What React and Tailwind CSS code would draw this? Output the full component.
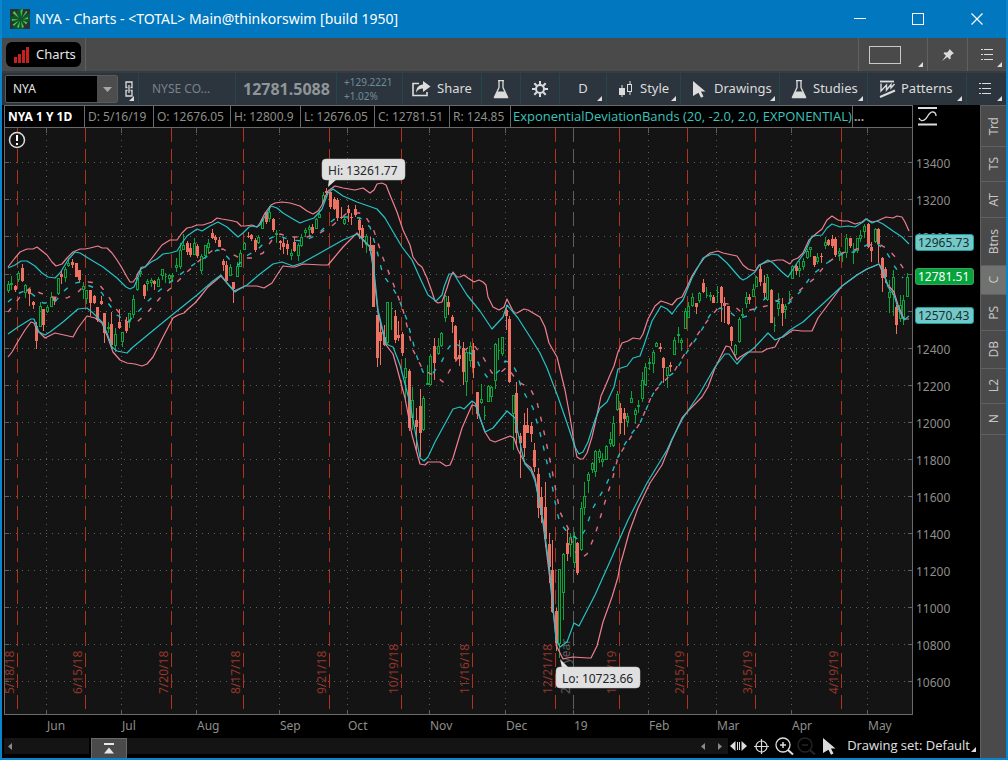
import { useState } from "react";
import { clsx } from "clsx";

// Plot geometry, in chart units
const LEFT = 4;
const RIGHT = 912;
const TOP = 127;
const BOTTOM = 714;

// direction + x, high, body top, body bottom, low
const CANDLES = `
g8,281,284,291,293 g11,276,283,285,290 r15,285,286,290,292 g18,271,273,280,282 r22,264,268,281,282 g25,284,285,293,298
r29,288,289,294,306 r33,301,302,305,309 r36,322,326,341,349 g40,302,306,327,327 r43,309,309,325,331 g47,305,307,312,313
g51,292,297,307,307 r54,297,297,301,305 g58,278,278,294,295 r61,270,274,277,284 g65,267,269,278,282 g68,258,263,266,267
r72,259,262,265,268 r76,263,263,277,277 r79,270,270,280,282 g83,282,286,290,299 g86,290,290,299,304 r90,290,290,303,316
r94,295,296,303,304 r97,307,307,320,322 r101,296,301,304,305 r104,313,313,333,343 g108,322,327,329,333 r111,312,324,345,347
g115,328,334,346,352 r119,309,322,328,329 g122,332,332,342,347 r126,317,321,331,333 g129,313,313,322,328 g133,295,299,315,318
g137,277,278,290,291 g140,267,271,274,277 r144,284,285,296,299 g147,279,281,284,291 g151,278,280,283,287 r154,280,281,284,290
g158,277,279,287,287 g162,269,269,276,280 g165,273,276,277,283 g169,274,275,279,282 g172,273,275,277,282 g176,258,265,268,272
g180,243,250,267,269 g183,234,245,250,250 r187,241,243,252,255 r190,243,248,255,257 g194,238,243,255,255 r197,244,246,256,258
g201,254,256,271,274 g205,245,245,256,259 g208,239,243,248,253 r212,229,233,238,239 r215,235,237,240,243 r219,237,240,247,247
r223,259,261,265,271 r226,261,265,281,281 g230,264,267,276,276 r233,282,282,289,303 g237,262,266,277,277 g240,250,253,267,267
g244,242,243,250,250 r248,232,236,237,238 r251,234,235,239,241 r255,238,240,250,252 g258,235,237,243,244 g262,217,219,229,229
r266,212,212,222,224 g269,206,212,219,222 r273,218,219,230,232 g276,230,233,235,243 r280,240,241,243,250 r283,238,243,247,254
r287,240,244,249,255 g291,249,253,256,260 r294,237,242,251,252 g298,243,245,256,261 g301,234,237,246,247 g305,228,230,233,237
g309,225,227,230,237 r312,224,227,233,234 g316,218,219,229,229 g319,210,214,218,218 g323,192,195,203,203 r326,188,191,193,194
r330,192,192,207,209 r334,197,199,209,210 r337,198,200,218,221 r341,207,217,218,219 g344,217,219,224,225 r348,205,209,213,222
r351,213,217,218,225 r355,205,209,215,217 r359,218,220,230,239 r362,225,228,238,248 g366,234,236,245,253 r370,237,245,251,253
r373,245,245,307,307 r377,315,315,358,367 r380,320,332,341,365 r384,325,337,345,346 g387,302,302,343,344 g391,302,308,309,330
r395,310,316,340,343 r398,321,335,338,341 r402,332,334,353,356 g405,358,368,378,402 r409,369,371,428,431 g412,387,400,418,430
r416,408,420,427,450 r420,389,406,433,457 g423,396,398,430,431 g427,365,383,385,385 g430,354,356,385,385 r434,338,346,363,380
g438,338,346,354,355 g441,332,333,346,347 g445,295,296,318,322 r448,296,302,307,315 r452,315,317,322,333 r455,325,326,359,360
r459,340,355,359,366 r463,342,348,372,385 g466,348,352,382,396 g470,342,346,361,367 r473,343,350,368,378 r477,392,392,414,419
g481,384,399,403,404 g484,406,415,416,420 g488,385,386,402,402 g491,386,387,397,402 g495,343,344,381,389 g498,338,350,351,360
g502,337,337,354,356 r506,305,310,316,330 r509,316,319,382,383 g513,395,395,414,450 r516,382,393,433,447 r520,433,436,443,478
r524,413,425,448,457 r527,408,425,433,433 r531,422,426,434,442 r534,443,450,467,472 r538,468,474,508,518 r541,487,497,515,523
r545,482,507,539,547 r549,533,544,567,583 r552,540,570,612,613 r556,608,611,643,651 g559,569,569,644,658 g563,553,554,593,620
r567,529,543,554,561 g570,533,537,545,557 g574,532,536,563,568 r577,542,543,573,575 g581,502,508,550,551 g584,482,496,508,515
g588,472,474,481,493 g592,462,463,470,473 g595,450,451,472,477 g599,449,451,458,463 g602,453,459,462,467 g606,445,446,460,460
g610,432,439,444,447 g613,416,423,446,447 g617,391,394,410,411 r620,403,408,423,434 r624,408,413,419,435 g627,413,416,422,427
g631,391,398,403,403 g635,408,410,415,424 g638,400,405,407,413 g642,372,380,399,402 g645,363,367,385,386 g649,358,362,364,370
g653,350,352,364,373 g656,342,343,347,347 r660,343,347,349,352 r663,357,358,368,383 g667,367,367,376,388 r670,362,365,367,372
g674,337,340,355,355 g678,327,334,336,343 g681,338,340,343,351 g685,308,311,329,329 g688,302,306,318,318 g692,293,297,306,307
r696,303,303,307,314 g699,292,293,301,303 r703,279,283,292,293 g706,287,295,296,298 g710,292,295,297,301 r713,295,297,303,303
g717,286,292,293,303 r721,286,287,303,322 r724,297,303,306,323 r728,306,306,324,325 r731,326,327,341,346 g735,344,345,355,358
g739,317,319,342,343 g742,308,314,316,317 g746,292,297,304,308 r749,294,297,300,304 g753,284,289,297,297 g756,276,277,287,287
r760,265,269,282,286 r764,275,283,293,300 g767,274,277,300,301 r771,289,290,323,323 g774,317,325,326,332 g778,293,303,309,316
r782,298,304,313,326 g785,304,306,310,319 g789,291,294,295,304 g792,265,266,279,279 r796,264,266,271,275 g799,261,268,271,277
g803,258,261,267,270 g807,249,251,258,259 g810,247,247,250,257 r814,256,256,265,267 g817,253,257,262,264 r821,253,256,257,263
g825,237,242,246,249 r828,239,240,245,246 r832,235,239,246,248 r835,237,239,255,257 g839,248,251,254,261 g842,252,253,254,262
g846,234,238,253,258 r850,238,238,246,248 g853,243,252,253,264 g857,238,238,251,253 g860,230,235,239,242 g864,224,226,232,238
r868,223,224,247,248 r871,242,247,251,262 g875,228,229,242,243 r878,228,229,244,263 r882,257,258,278,292 r885,267,269,277,283
g889,280,292,298,313 g893,270,277,295,316 r896,305,307,325,334 g900,295,305,319,322 g903,295,300,319,325 g907,273,277,297,297`
  .trim()
  .split(/\s+/)
  .map((row) => {
    const [x, high, top, bottom, low] = row.slice(1).split(",").map(Number);
    return { up: row[0] === "g", x, high, top, bottom, low };
  });

const PINK_UPPER =
  "8,267 15,258 20,252 27,249 33,249 37,247 42,251 47,255 52,262 56,266 62,264 67,258 73,252 80,249 85,249 90,248 98,246 102,248 107,248 112,253 117,260 122,268 127,277 130,282 133,282 136,278 138,273 142,267 145,267 152,258 162,245 170,240 177,240 182,233 187,228 192,227 197,225 203,225 212,222 217,218 222,219 228,220 233,221 237,222 241,226 245,226 252,225 257,227 260,223 265,213 271,205 275,203 282,202 290,203 300,206 307,211 313,214 318,211 322,205 325,197 328,191 335,186 343,188 355,190 363,188 370,193 374,190 377,184 382,183 386,185 390,195 397,212 403,230 410,245 413,257 418,264 422,267 427,278 432,292 435,301 438,303 442,302 447,288 450,278 453,272 457,277 460,277 464,275 468,278 474,282 479,280 483,282 486,285 488,297 493,307 499,310 504,307 507,299 510,305 514,313 517,313 524,309 528,310 533,313 540,317 545,327 549,343 557,357 565,390 570,417 574,442 577,457 580,459 583,459 587,453 592,437 597,415 601,396 605,387 610,375 614,366 618,352 622,343 628,341 633,338 640,339 643,334 648,319 655,306 661,301 667,303 672,305 677,299 682,297 687,287 692,276 697,268 705,257 710,253 718,251 723,253 737,256 743,265 748,269 755,271 759,265 767,262 777,260 783,260 790,264 793,260 798,258 803,253 809,240 817,233 822,229 827,220 832,216 838,220 843,221 848,221 855,224 862,222 866,219 872,222 877,221 886,217 893,218 897,216 902,217 905,222 909,231";
const CYAN_UPPER =
  "8,268 15,265 21,261 27,261 35,266 42,273 48,277 55,278 60,273 68,260 75,252 80,253 88,258 103,267 117,278 126,287 130,289 134,287 137,280 141,269 145,267 151,262 157,259 163,254 170,253 177,251 182,243 187,236 197,229 202,231 210,226 218,222 227,227 238,237 243,233 249,227 252,226 257,227 260,225 271,206 277,208 283,213 293,219 300,223 305,221 314,218 322,209 328,193 333,189 343,196 357,202 377,209 385,218 392,230 402,247 412,260 420,278 428,295 436,301 442,295 444,287 449,274 454,274 457,279 467,295 480,311 492,329 503,317 507,305 518,318 532,340 540,353 547,368 558,397 567,423 575,447 579,454 583,452 588,442 595,420 600,408 607,402 614,387 618,369 627,366 633,358 640,356 644,345 652,321 661,306 667,309 672,314 677,307 683,300 692,278 703,258 712,254 718,255 727,263 740,278 743,280 747,278 755,272 760,265 768,260 773,263 782,272 788,277 797,263 805,252 812,236 822,235 827,228 832,224 840,227 848,226 855,227 863,222 866,219 872,223 877,221 883,224 893,231 902,237 909,244";
const CYAN_LOWER =
  "8,334 18,327 31,319 34,319 37,327 39,332 45,335 50,332 63,322 78,309 87,308 93,313 102,322 107,333 112,347 117,351 127,353 133,347 150,333 172,315 197,295 213,281 221,275 227,283 235,292 238,290 247,285 260,274 273,264 282,262 293,266 302,263 320,253 343,240 357,234 365,242 370,247 374,270 378,310 386,344 393,347 400,365 410,403 420,458 424,461 428,457 435,442 453,409 460,407 464,409 472,401 475,403 480,418 485,432 493,428 507,411 515,418 522,452 525,464 531,471 535,481 543,520 550,573 556,640 560,647 567,642 574,623 579,626 595,595 612,557 620,538 628,520 647,483 667,450 672,439 683,418 700,393 715,367 725,354 729,354 737,364 743,357 755,347 768,333 775,340 782,337 790,330 803,322 827,300 842,286 857,275 867,269 879,264 883,270 888,287 894,295 898,308 904,320 909,316";
const PINK_LOWER =
  "8,357 12,352 17,343 25,330 31,322 34,323 37,330 45,338 55,333 73,337 78,328 87,316 95,318 102,323 108,338 113,352 120,360 127,363 135,364 142,366 147,364 153,357 163,337 173,318 178,315 184,313 188,309 195,303 200,297 208,287 221,276 227,283 234,291 245,286 257,286 264,288 272,283 277,275 283,266 292,267 295,267 303,264 322,265 328,265 333,259 343,247 357,233 370,247 373,267 378,313 386,345 393,354 397,368 405,398 412,435 420,464 425,465 428,462 440,462 446,466 450,465 453,458 462,428 472,405 476,406 480,418 485,432 490,440 495,442 500,440 510,436 514,438 518,450 525,463 531,468 535,478 543,523 550,580 557,647 563,659 567,658 573,657 588,658 591,658 597,646 603,622 612,597 618,577 620,565 623,555 629,533 638,508 650,483 662,465 672,440 682,418 688,411 702,397 708,387 715,368 726,346 730,347 737,360 740,357 748,352 762,352 767,349 775,347 780,338 783,337 793,330 802,331 812,331 818,318 827,306 842,286 857,275 867,269 879,264 888,285 894,292 898,305 904,319 909,319";
const CYAN_MID =
  "8,302 17,294 27,290 37,298 43,303 54,303 63,292 72,284 80,282 87,285 95,288 102,293 108,303 117,315 128,322 137,313 147,302 160,290 173,280 190,267 200,260 208,256 217,250 222,251 230,260 238,265 248,255 257,250 267,240 277,235 290,240 303,241 317,235 327,225 337,217 350,217 360,218 370,227 376,247 383,275 392,287 398,297 407,320 417,357 423,372 433,373 442,361 447,350 453,342 458,345 467,352 475,355 480,367 487,377 493,376 500,370 505,361 512,363 517,373 521,387 527,398 533,408 540,433 543,445 552,485 557,512 560,523 568,533 579,540 585,530 593,508 605,487 613,470 618,457 623,447 632,433 640,423 653,394 663,380 675,372 687,352 700,333 710,315 720,308 730,312 738,319 750,315 760,303 767,297 777,301 787,305 800,292 812,275 827,263 840,255 853,252 867,245 877,243 887,253 895,267 903,278";
const PINK_MID =
  "8,312 20,297 30,288 40,293 53,297 67,298 78,292 88,282 98,283 107,294 117,310 127,322 137,322 147,313 160,298 173,286 187,272 200,260 213,250 223,249 230,253 240,258 252,258 263,253 272,240 280,234 290,237 307,237 320,233 333,225 347,213 363,213 373,228 383,258 393,283 403,310 413,350 423,370 437,377 443,382 453,365 462,352 473,344 483,357 492,373 500,373 507,367 518,382 530,388 537,402 543,427 552,470 560,512 570,532 573,548 580,559 587,554 595,535 605,502 613,477 618,457 627,443 640,423 653,393 675,370 687,350 700,331 710,317 723,303 733,305 740,311 750,310 770,305 780,299 790,300 800,290 815,278 827,263 842,253 857,249 870,245 877,243 888,249 897,259 908,275";

const PRICES = [
  [13400, 163], [13200, 200], [13000, 237], [12800, 275], [12600, 312],
  [12400, 349], [12200, 386], [12000, 423], [11800, 460], [11600, 497],
  [11400, 534], [11200, 571], [11000, 608], [10800, 645], [10600, 682],
];

const MONTHS = [
  ["Jun", 46], ["Jul", 121], ["Aug", 196], ["Sep", 279], ["Oct", 347], ["Nov", 429],
  ["Dec", 505], ["19", 573], ["Feb", 648], ["Mar", 716], ["Apr", 791], ["May", 867],
];

const EXPIRATIONS = [
  ["5/18/18", 17], ["6/15/18", 85], ["7/20/18", 171], ["8/17/18", 243], ["9/21/18", 329], ["10/19/18", 401],
  ["11/16/18", 472], ["12/21/18", 555], ["1/18/19", 619], ["2/15/19", 687], ["3/15/19", 755], ["4/19/19", 841],
];

const PRICE_TAGS = [
  { value: "12965.73", y: 234, fill: "#74c8c8", stroke: "#15a0a0", text: "#12302f" },
  { value: "12781.51", y: 268, fill: "#06a53c", stroke: "#3f9f5c", text: "#ffffff" },
  { value: "12570.43", y: 307, fill: "#74c8c8", stroke: "#15a0a0", text: "#12302f" },
];

const QUOTE = ["D: 5/16/19", "O: 12676.05", "H: 12800.9", "L: 12676.05", "C: 12781.51", "R: 124.85"];
const QUOTE_WIDTHS = ["w-[69px]", "w-[77px]", "w-[70px]", "w-[74px]", "w-[75px]", "w-[61px]"];

const GADGETS = [
  ["Trd", "h-[41px]"], ["TS", "h-[35px]"], ["AT", "h-[36px]"], ["Btns", "h-[48px]"], ["C", "h-[29px]"],
  ["PS", "h-[36px]"], ["DB", "h-[38px]"], ["L2", "h-[35px]"], ["N", "h-[31px]"],
];

/* ---------- icons ---------- */

function Corner() {
  return (
    <svg className="absolute right-1 bottom-1" width="5" height="5" viewBox="0 0 5 5" aria-hidden="true">
      <path d="M5 0v5H0z" fill="#dcdcdc" />
    </svg>
  );
}

function LogoIcon() {
  return (
    <svg width="20" height="20" viewBox="0 0 20 20" aria-hidden="true">
      <rect width="20" height="20" fill="#14532d" />
      <path d="M0 0h8l-2 6-6 2zM12 0h8v4l-6 3zM0 12l5 1-2 7H0zM14 14l6-2v8h-7z" fill="#2c3134" />
      <g fill="#43c947">
        <path d="M11 8L10.500 1l2.500-1z" />
        <path d="M12 9l4-7 1.500 1z" />
        <path d="M13 10.500L18 8v2z" />
        <path d="M12.500 11.500l5 2-1.500 2z" />
        <path d="M11 12l3 6-2 1z" />
        <path d="M10 12l-1 7-2-1z" />
        <path d="M9 11.500L4 17l-1.500-1.500z" />
        <path d="M8.500 10.500L2 12v-2z" />
        <path d="M9 9L2.500 4l2-2z" />
      </g>
    </svg>
  );
}

function BarsIcon() {
  return (
    <svg width="16" height="16" viewBox="0 0 16 16" aria-hidden="true">
      <path d="M0 10h3v6H0zM4 7h3v9H4zM8 3h3v13H8zM12 0h3v16h-3z" fill="#c62020" />
    </svg>
  );
}

function LinkIcon() {
  return (
    <svg width="8" height="16" viewBox="0 0 8 16" fill="none" stroke="#dcdcdc" strokeWidth="1.3" aria-hidden="true">
      <path d="M2.500 6.500H1V1h6v5.500H5.500M2.500 9.500H1V15h6V9.500H5.500M4 4v8" />
    </svg>
  );
}

function ShareIcon() {
  return (
    <svg width="19" height="16" viewBox="0 0 19 16" aria-hidden="true">
      <path d="M7 2.500H1v12h14V11" fill="none" stroke="#dcdcdc" strokeWidth="1.600" />
      <path d="M11 0l7.500 5.500L11 11V7.500c-3 0-5 .8-7 4C4.300 7 6.500 3.800 11 3.500z" fill="#dcdcdc" />
    </svg>
  );
}

function FlaskIcon() {
  return (
    <svg width="16" height="19" viewBox="0 0 16 19" aria-hidden="true">
      <path d="M5 .7h6M6 1v6.500L1.500 17h13L10 7.500V1" fill="none" stroke="#dcdcdc" strokeWidth="1.300" />
      <path d="M4.500 11.500h7l3.700 6.800H.8z" fill="#dcdcdc" />
    </svg>
  );
}

function GearIcon() {
  return (
    <svg width="16" height="16" viewBox="0 0 16 16" fill="none" stroke="#dcdcdc" aria-hidden="true">
      <circle cx="8" cy="8" r="4" strokeWidth="2" />
      <path
        d="M8 0v3.500M8 12.500V16M0 8h3.500M12.500 8H16M2.300 2.300l2.500 2.500M11.200 11.200l2.500 2.500M13.700 2.300l-2.500 2.500M4.800 11.200l-2.500 2.500"
        strokeWidth="2"
      />
    </svg>
  );
}

function CandleIcon() {
  return (
    <svg width="14" height="16" viewBox="0 0 14 16" aria-hidden="true">
      <path d="M3 4v12M11 0v3M11 11v3" stroke="#dcdcdc" />
      <rect x="0" y="7" width="6" height="7" fill="#dcdcdc" />
      <rect x="8.5" y="3.5" width="4" height="7" fill="none" stroke="#dcdcdc" />
    </svg>
  );
}

function CursorIcon() {
  return (
    <svg width="13" height="17" viewBox="0 0 13 17" aria-hidden="true">
      <path d="M0 0l12.500 10.500H8l2.500 5-2.500 1.200-2.500-5L0 15z" fill="#dcdcdc" />
    </svg>
  );
}

function PatternsIcon() {
  return (
    <svg width="17" height="18" viewBox="0 0 17 18" fill="none" stroke="#dcdcdc" aria-hidden="true">
      <path d="M1 1.500h14" strokeWidth="1.800" />
      <path d="M2 3.500v7.500L7.500 5v5L12 4.500v3.500l3.500-4" strokeWidth="1.400" />
      <path d="M1 17l15-6.500" strokeWidth="2" />
    </svg>
  );
}

function ListIcon() {
  return (
    <svg width="12" height="12" viewBox="0 0 12 12" stroke="#dcdcdc" aria-hidden="true">
      <path d="M0 .5h2M3 .5h9M0 5.500h2M3 5.500h9M0 10.500h2M3 10.500h9" />
    </svg>
  );
}

function PinIcon() {
  return (
    <svg width="12" height="12" viewBox="0 0 12 12" aria-hidden="true">
      <path d="M7.500 0L12 4.500l-1.500.5-2 2 .2 2.500-1 1-2.400-2.400L0 12l3.900-5.300L1.500 4.300l1-1L5 3.500l2-2z" fill="#dcdcdc" />
    </svg>
  );
}

/* ---------- chart ---------- */

function Bubble({ x, y, width, label, tip }) {
  return (
    <g>
      <path d={tip} fill="#e0e0e0" />
      <rect x={x} y={y} width={width} height="21" rx="4" fill="#e0e0e0" stroke="#c4c4c4" strokeWidth="0.5" />
      <text x={x + 6} y={y + 16} fontSize="12" fill="#20262a">{label}</text>
    </g>
  );
}

function PriceChart() {
  return (
    <svg viewBox="4 127 976 611" className="block w-full h-auto font-['Noto_Sans','Open_Sans',sans-serif]" role="img" aria-label="NYA daily price chart">
      <rect x={LEFT} y={TOP} width={RIGHT - LEFT} height={BOTTOM - TOP} fill="#141414" />

      {/* grid */}
      <g stroke="#5e5e5e" shapeRendering="crispEdges">
        {PRICES.map(([price, y]) => (
          <g key={price}>
            <line x1={LEFT + 6} x2={RIGHT} y1={y - 0.5} y2={y - 0.5} strokeDasharray="1 5" />
            <path d={`M${LEFT} ${y - 0.5}h5M${RIGHT - 4} ${y - 0.5}h4`} />
          </g>
        ))}
        {MONTHS.map(([name, x]) => (
          <g key={name}>
            <line
              x1={x + 0.5} x2={x + 0.5} y1={TOP + 1} y2={BOTTOM}
              strokeDasharray={name === "19" ? "14 7" : "1 5"}
            />
            <path d={`M${x + 0.5} ${TOP + 1}v5M${x + 0.5} ${BOTTOM - 4}v4`} />
          </g>
        ))}
      </g>

      {/* option expirations */}
      {EXPIRATIONS.map(([date, x]) => (
        <g key={date}>
          <line x1={x + 0.5} x2={x + 0.5} y1={TOP + 1} y2={BOTTOM} stroke="#b03320" strokeDasharray="14 7" shapeRendering="crispEdges" />
          <text transform={`translate(${x - 3} 694) rotate(-90)`} fontSize="12" fill="#93362c">{date}</text>
        </g>
      ))}
      <text transform="translate(570 694) rotate(-90)" fontSize="12" fill="#5c5c5c">2018 year</text>

      {/* candles */}
      <g shapeRendering="crispEdges">
        {CANDLES.map((c) =>
          c.up ? (
            <path
              key={c.x}
              d={`M${c.x + 0.5} ${c.high}V${c.top}M${c.x + 0.5} ${c.bottom}V${c.low}M${c.x - 0.5} ${c.top + 0.5}h2V${c.bottom - 0.5}h-2z`}
              fill="none"
              stroke="#0aa53c"
            />
          ) : (
            <g key={c.x} fill="#ee7261">
              <rect x={c.x} y={c.high} width="1" height={c.low - c.high} />
              <rect x={c.x - 1} y={c.top} width="3" height={c.bottom - c.top} />
            </g>
          )
        )}
      </g>

      {/* deviation bands */}
      <g fill="none" strokeLinejoin="round">
        <polyline points={PINK_MID} stroke="#e06f84" strokeWidth="1.4" strokeDasharray="5 9" />
        <polyline points={CYAN_MID} stroke="#1cbcc0" strokeWidth="1.4" strokeDasharray="5 9" />
        <polyline points={PINK_UPPER} stroke="#f07f92" strokeWidth="1.2" />
        <polyline points={PINK_LOWER} stroke="#f07f92" strokeWidth="1.2" />
        <polyline points={CYAN_UPPER} stroke="#25c3c6" strokeWidth="1.2" />
        <polyline points={CYAN_LOWER} stroke="#25c3c6" strokeWidth="1.2" />
      </g>

      {/* frame */}
      <path
        d={`M${LEFT + 0.5} ${TOP}V${BOTTOM + 0.5}H${RIGHT + 0.5}V${TOP}`}
        fill="none"
        stroke="#6a6a6a"
        shapeRendering="crispEdges"
      />
      <path d={`M${LEFT} ${TOP + 0.5}H${RIGHT}`} stroke="#6a6a6a" shapeRendering="crispEdges" />

      {/* axes */}
      <g fontSize="12" fill="#8e8e8a">
        {PRICES.filter(([price]) => price !== 12800 && price !== 12600).map(([price, y]) => (
          <text key={price} x="916" y={y + 5}>{price}</text>
        ))}
        {MONTHS.map(([name, x]) => (
          <text key={name} x={x + 1} y="730">{name}</text>
        ))}
      </g>
      {PRICE_TAGS.map((tag) => (
        <g key={tag.value}>
          <rect x="915.5" y={tag.y + 0.5} width="58" height="16" rx="2.5" fill={tag.fill} stroke={tag.stroke} />
          <text x="918" y={tag.y + 13} fontSize="12" fill={tag.text}>{tag.value}</text>
        </g>
      ))}

      <Bubble x={322} y={159} width={83} label="Hi: 13261.77" tip="M328 187l1-8h8z" />
      <Bubble x={556} y={667} width={84} label="Lo: 10723.66" tip="M560 659l2 9h7z" />

      <circle cx="17" cy="140" r="7.5" fill="#141414" stroke="#dcdcdc" strokeWidth="1.5" />
      <path d="M17 135v6M17 143v2" stroke="#ffffff" strokeWidth="2" />
    </svg>
  );
}

/* ---------- toolbar ---------- */

function ToolButton({ label, icon, className, corner = true, name }) {
  return (
    <button
      type="button"
      aria-label={name}
      className={clsx("relative flex h-full items-center border-r border-[#24474c] text-[13px] text-[#dcdcdc]", className)}
    >
      {icon}
      {label && <span>{label}</span>}
      {corner && <Corner />}
    </button>
  );
}

function Toolbar() {
  const [symbol, setSymbol] = useState("NYA");

  return (
    <div className="flex h-[34px] items-center border-t-2 border-[#343c44] bg-[#2c353e]">
      <div className="ml-[3px] flex h-[28px] w-[113px] items-center rounded-xs border border-[#5a5a5a] bg-black">
        <input
          aria-label="Symbol"
          value={symbol}
          onChange={(e) => setSymbol(e.target.value)}
          className="min-w-0 flex-1 bg-transparent pl-[7px] text-xs text-[#e6e6e6] outline-none"
        />
        <button type="button" aria-label="Recent symbols" className="flex h-full w-[20px] items-center justify-center bg-[#4d4d4d]">
          <svg width="9" height="5" viewBox="0 0 9 5" aria-hidden="true">
            <path d="M0 0h9L4.500 5z" fill="#a8a8a8" />
          </svg>
        </button>
      </div>
      <ToolButton name="Link" className="w-[21px] pl-[7px]" icon={<LinkIcon />} />
      <div className="flex h-full w-[97px] items-center border-r border-[#24474c] pl-[13px] text-xs text-[#78828a]">NYSE CO...</div>
      <div className="flex h-full w-[101px] items-center border-r border-[#24474c] pl-[7px] text-base font-bold text-[#8f9598]">12781.5088</div>
      <div className="flex h-full w-[66px] flex-col justify-center border-r border-[#24474c] pl-[7px] text-[10px] leading-[14px] text-[#6c8c9a]">
        <span>+129.2221</span>
        <span>+1.02%</span>
      </div>
      <ToolButton label="Share" corner={false} className="w-[79px] gap-[6px] pl-[9px]" icon={<ShareIcon />} />
      <ToolButton name="Labs" corner={false} className="w-[39px] justify-center" icon={<FlaskIcon />} />
      <ToolButton name="Settings" corner={false} className="w-[39px] justify-center" icon={<GearIcon />} />
      <ToolButton label="D" className="w-[47px] justify-center" />
      <ToolButton label="Style" className="w-[74px] gap-[7px] pl-[12px]" icon={<CandleIcon />} />
      <ToolButton label="Drawings" className="w-[99px] gap-2 pl-[12px]" icon={<CursorIcon />} />
      <ToolButton label="Studies" className="w-[88px] gap-[6px] pl-[11px]" icon={<FlaskIcon />} />
      <ToolButton label="Patterns" className="w-[99px] gap-[5px] pl-[11px]" icon={<PatternsIcon />} />
      <button type="button" aria-label="Menu" className="relative flex h-full flex-1 items-center pl-[12px]">
        <ListIcon />
        <Corner />
      </button>
    </div>
  );
}

export default function App() {
  const [gadget, setGadget] = useState("C");

  return (
    <div className="flex min-h-screen w-full flex-col border-x-2 border-b-2 border-[#0a84cc] bg-black font-['Noto_Sans','Open_Sans',sans-serif]">
      {/* Title bar */}
      <header className="flex h-[38px] items-center bg-[#0077be] pl-2">
        <LogoIcon />
        <h1 className="ml-[5px] flex-1 text-sm text-white">NYA - Charts - &lt;TOTAL&gt; Main@thinkorswim [build 1950]</h1>
        <div className="flex h-full">
          <button type="button" aria-label="Minimize" className="flex w-[58px] items-center justify-center">
            <svg width="12" height="12" viewBox="0 0 12 12"><path d="M0 5.500h12" stroke="#fff" /></svg>
          </button>
          <button type="button" aria-label="Maximize" className="flex w-[58px] items-center justify-center">
            <svg width="12" height="12" viewBox="0 0 12 12"><rect x=".5" y=".5" width="11" height="11" fill="none" stroke="#fff" /></svg>
          </button>
          <button type="button" aria-label="Close" className="flex w-[59px] items-center justify-center">
            <svg width="12" height="12" viewBox="0 0 12 12"><path d="M.5.5l11 11M11.500.5l-11 11" stroke="#fff" strokeWidth="1.2" /></svg>
          </button>
        </div>
      </header>

      {/* Tabs */}
      <nav className="flex h-[33px] bg-[#4a4a4a]">
        <div className="flex w-[84px] items-center border-r border-[#606060] pl-1">
          <button type="button" className="flex h-[25px] w-[75px] items-center gap-[6px] rounded-md bg-black pl-2 text-[13px] text-[#e6e6e6]">
            <BarsIcon />
            Charts
          </button>
        </div>
        <div className="ml-auto flex">
          <button type="button" aria-label="Layout" className="relative w-[69px] border-l border-[#606060] pl-[10px]">
            <span className="block h-[18px] w-[32px] border border-[#c8c8c8]" />
            <Corner />
          </button>
          <button type="button" aria-label="Pin" className="flex w-[40px] items-center justify-center border-l border-[#606060]">
            <PinIcon />
          </button>
          <button type="button" aria-label="Window menu" className="relative flex w-[39px] items-center border-l border-[#606060] pl-[13px]">
            <ListIcon />
            <Corner />
          </button>
        </div>
      </nav>

      <Toolbar />

      <div className="flex flex-1">
        <main className="flex min-w-0 flex-1 flex-col pl-[2px]">
          {/* Quote row */}
          <div className="flex h-[22px] text-xs text-[#8e8e8a]">
            <div className="flex min-w-0 flex-1 border-t border-r border-l border-[#6a6a6a]">
              <div className="flex w-[80px] items-center border-r border-[#6a6a6a] pl-[3px] font-bold whitespace-nowrap text-white">NYA 1 Y 1D</div>
              {QUOTE.map((item, i) => (
                <div key={item} className={clsx("flex items-center border-r border-[#6a6a6a] pl-[3px] whitespace-nowrap", QUOTE_WIDTHS[i])}>
                  {item}
                </div>
              ))}
              <div className="flex w-[342px] items-center border-r border-[#6a6a6a] pl-[2px] font-['Open_Sans',sans-serif] text-[13px] whitespace-nowrap text-[#3cc4bc]">
                ExponentialDeviationBands (20, -2.0, 2.0, EXPONENTIAL)
              </div>
              <div className="flex items-center pl-px font-bold text-[#a8a49a]">...</div>
            </div>
            <div className="w-[67px] pt-[2px] pl-[5px]">
              <svg width="19" height="19" viewBox="0 0 19 19" fill="none" stroke="#dcdcdc" aria-hidden="true">
                <path d="M0 1h19M0 17.500h19" strokeWidth="2" />
                <path d="M1 11c1 3 4 4 7 .5 3-4 4-7 7-6.500 2 .3 3 1.500 3 4" strokeWidth="1.300" />
              </svg>
            </div>
          </div>

          <PriceChart />

          {/* Bottom bar */}
          <footer className="flex h-[20px] items-start">
            <div className="flex h-[16px] w-[85px] items-center bg-[#141414]">
              <svg className="ml-1" width="4" height="7" viewBox="0 0 4 7" aria-hidden="true"><path d="M4 0v7L0 3.500z" fill="#8a8a8a" /></svg>
            </div>
            <button type="button" aria-label="Expand panel" className="ml-[2px] flex h-[20px] w-[36px] items-center justify-center border border-b-0 border-[#6a6a6a] bg-[#4a4a4a]">
              <svg width="10" height="11" viewBox="0 0 10 11" aria-hidden="true"><path d="M0 0h10v2H0zM5 4.500l5 6H0z" fill="#e6e6e6" /></svg>
            </button>
            <div className="flex h-[16px] flex-1 items-center justify-end gap-[13px] bg-[#141414] pr-[6px]">
              <svg width="4" height="7" viewBox="0 0 4 7" aria-hidden="true"><path d="M4 0v7L0 3.500z" fill="#8a8a8a" /></svg>
              <svg width="4" height="7" viewBox="0 0 4 7" aria-hidden="true"><path d="M0 0v7l4-3.500z" fill="#8a8a8a" /></svg>
            </div>
            <div className="flex h-[16px] w-[252px] items-center">
              <button type="button" aria-label="Pan" className="ml-[2px]">
                <svg width="17" height="12" viewBox="0 0 17 12" aria-hidden="true">
                  <path d="M5.500 1v10L0 6zM11.500 1v10L17 6z" fill="#dcdcdc" />
                  <path d="M7.500 2v8M9.500 2v8" stroke="#dcdcdc" />
                </svg>
              </button>
              <button type="button" aria-label="Crosshair" className="ml-[7px]">
                <svg width="15" height="15" viewBox="0 0 15 15" fill="none" stroke="#dcdcdc" strokeWidth="1.200" aria-hidden="true">
                  <circle cx="7.500" cy="7.500" r="5.500" />
                  <path d="M7.500 0v15M0 7.500h15" />
                </svg>
              </button>
              <button type="button" aria-label="Zoom in" className="ml-[6px]">
                <svg width="19" height="18" viewBox="0 0 19 18" fill="none" stroke="#dcdcdc" aria-hidden="true">
                  <circle cx="8" cy="8" r="7" strokeWidth="1.300" />
                  <path d="M5 8h6M8 5v6" strokeWidth="1.500" />
                  <path d="M13 13l5 4.500" strokeWidth="2" />
                </svg>
              </button>
              <button type="button" aria-label="Zoom out" disabled className="ml-[3px]">
                <svg width="19" height="18" viewBox="0 0 19 18" fill="none" stroke="#262626" aria-hidden="true">
                  <circle cx="8" cy="8" r="7" strokeWidth="1.300" />
                  <path d="M5 8h6" strokeWidth="1.500" />
                  <path d="M13 13l5 4.500" strokeWidth="2" />
                </svg>
              </button>
              <button type="button" aria-label="Pointer" className="ml-[7px]">
                <CursorIcon />
              </button>
              <button type="button" className="relative ml-auto pr-[10px] font-['Open_Sans',sans-serif] text-[13px] whitespace-nowrap text-[#e0e0e0]">
                Drawing set: Default
                <Corner />
              </button>
            </div>
          </footer>
        </main>

        {/* Gadgets */}
        <aside className="w-[26px] border-t border-l border-[#606060] bg-[#4a4a4a]">
          {GADGETS.map(([name, height]) => (
            <button
              key={name}
              type="button"
              onClick={() => setGadget(name)}
              className={clsx(
                "flex w-full items-center justify-center border-b border-[#606060] text-xs text-[#c4c4c4]",
                height,
                gadget === name && "bg-[#707270]"
              )}
            >
              <span className="rotate-180 [writing-mode:vertical-rl]">{name}</span>
            </button>
          ))}
        </aside>
      </div>
    </div>
  );
}
